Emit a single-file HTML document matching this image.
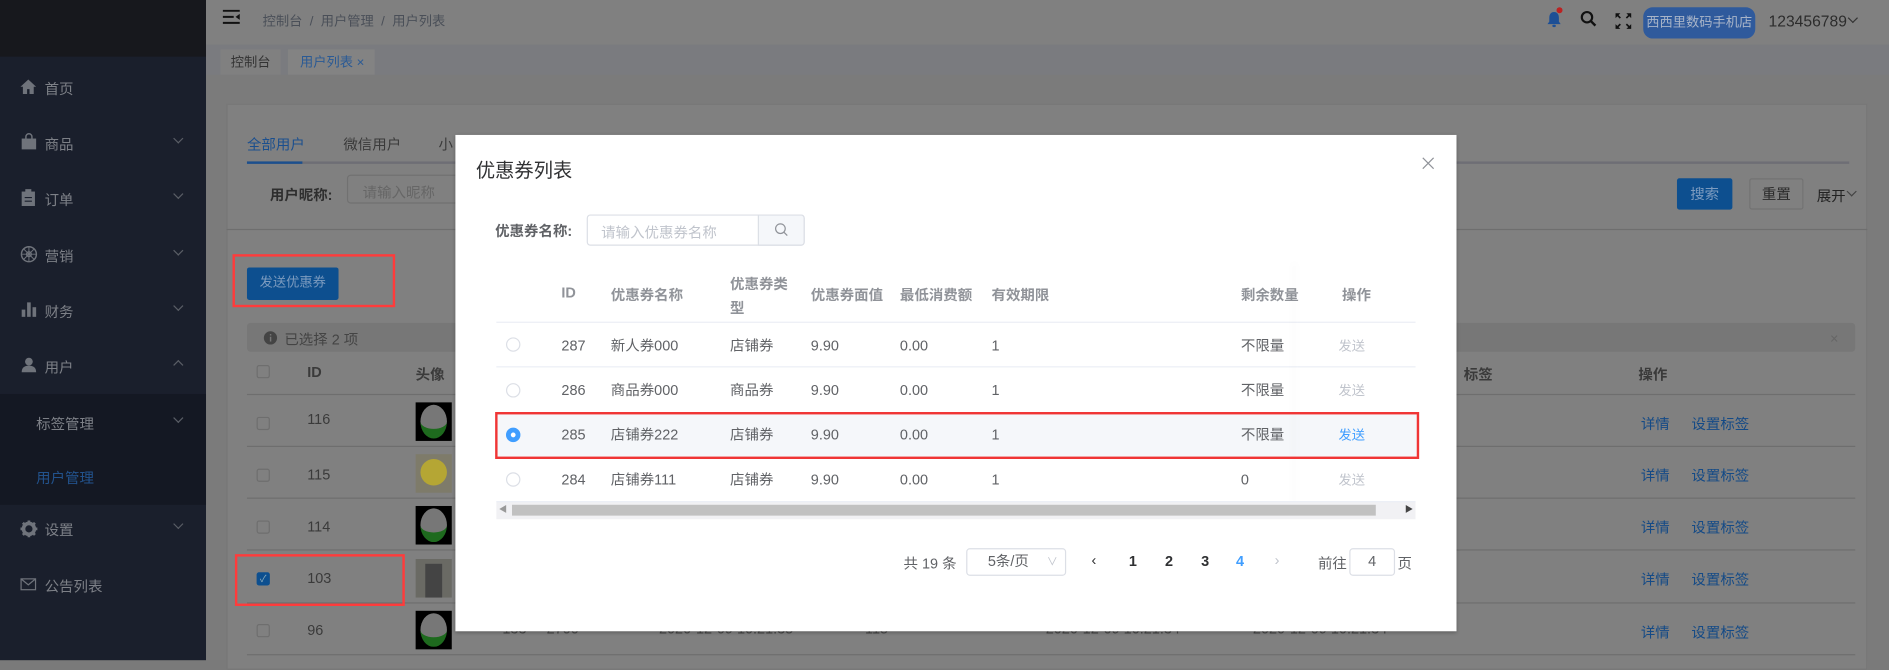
<!DOCTYPE html>
<html><head><meta charset="utf-8"><style>
*{margin:0;padding:0;box-sizing:border-box}
body{width:1889px;height:660px;overflow:hidden;background:#7a7a7a;font-family:"Liberation Sans","Noto Sans CJK SC",sans-serif;font-size:12px;color:#333}
#w{position:absolute;left:0;top:0;width:1568px;height:548px;transform:scale(1.20472);transform-origin:0 0;background:#7b7b7b}
.a{position:absolute;white-space:nowrap}
.side{left:0;top:0;width:171px;height:548px;background:#1a1f2c}
.mi{color:#7d8087;font-size:12px}
.chev{width:6px;height:6px;border-right:1px solid #5a5e66;border-bottom:1px solid #5a5e66;transform:rotate(45deg)}
.chevu{transform:rotate(-135deg)}
.g{color:#3a3a3a}
.line{height:1px;background:#6e6e6e}
.lk{color:#144a86}
.m{color:#606266}
.hl{height:1px;background:#ebeef5}
.radio{width:12px;height:12px;border:1px solid #dcdfe6;border-radius:50%;background:#fff}
svg.a{overflow:visible}
</style></head><body><div id="w">
<!-- sidebar -->
<div class="a side"></div>
<div class="a" style="left:0;top:0;width:171px;height:47px;background:#17181d"></div>
<div class="a" style="left:0;top:327px;width:171px;height:92px;background:#141823"></div>
<svg class="a" style="left:17px;top:66px" width="13" height="12" viewBox="0 0 13 12"><path d="M6.5 0L0 6h2v6h3.5V8h2v4H11V6h2z" fill="#6f737b"/></svg>
<div class="a mi" style="left:37px;top:65px">首页</div>
<svg class="a" style="left:18px;top:111px" width="12" height="13" viewBox="0 0 12 13"><path d="M0 4h12v9H0z" fill="#6f737b"/><path d="M3.5 5V2.5a2.5 2.5 0 0 1 5 0V5" stroke="#6f737b" fill="none" stroke-width="1.2"/></svg>
<div class="a mi" style="left:37px;top:111px">商品</div><div class="a chev" style="left:145px;top:112px"></div>
<svg class="a" style="left:18px;top:157px" width="11" height="14" viewBox="0 0 11 14"><path d="M0 2h11v12H0z" fill="#6f737b"/><rect x="3" y="0" width="5" height="3" fill="#6f737b"/><path d="M2.5 7h6M2.5 10h6" stroke="#1a1f2c"/></svg>
<div class="a mi" style="left:37px;top:157px">订单</div><div class="a chev" style="left:145px;top:158px"></div>
<svg class="a" style="left:17px;top:204px" width="14" height="14" viewBox="0 0 14 14"><circle cx="7" cy="7" r="6.2" stroke="#6f737b" fill="none" stroke-width="1.2"/><circle cx="7" cy="7" r="2" stroke="#6f737b" fill="none"/><path d="M7 1v12M1 7h12M2.8 2.8l8.4 8.4M11.2 2.8l-8.4 8.4" stroke="#6f737b" stroke-width=".8"/></svg>
<div class="a mi" style="left:37px;top:204px">营销</div><div class="a chev" style="left:145px;top:205px"></div>
<svg class="a" style="left:18px;top:251px" width="12" height="12" viewBox="0 0 12 12"><rect x="0" y="6" width="3" height="6" fill="#6f737b"/><rect x="4.5" y="0" width="3" height="12" fill="#6f737b"/><rect x="9" y="4" width="3" height="8" fill="#6f737b"/></svg>
<div class="a mi" style="left:37px;top:250px">财务</div><div class="a chev" style="left:145px;top:251px"></div>
<svg class="a" style="left:18px;top:297px" width="12" height="12" viewBox="0 0 12 12"><circle cx="6" cy="3.2" r="3.2" fill="#6f737b"/><path d="M0 12c0-4 2.5-5.5 6-5.5s6 1.5 6 5.5z" fill="#6f737b"/></svg>
<div class="a mi" style="left:37px;top:296px">用户</div><div class="a chev chevu" style="left:145px;top:300px"></div>
<div class="a mi" style="left:30px;top:343px">标签管理</div><div class="a chev" style="left:145px;top:344px"></div>
<div class="a" style="left:30px;top:388px;color:#22528c">用户管理</div>
<svg class="a" style="left:17px;top:432px" width="14" height="14" viewBox="0 0 14 14"><circle cx="7" cy="7" r="4.5" fill="none" stroke="#6f737b" stroke-width="3"/><path d="M7 0v3M7 11v3M0 7h3M11 7h3M2 2l2 2M10 10l2 2M12 2l-2 2M4 10l-2 2" stroke="#6f737b" stroke-width="2.2"/></svg>
<div class="a mi" style="left:37px;top:431px">设置</div><div class="a chev" style="left:145px;top:432px"></div>
<svg class="a" style="left:17px;top:480px" width="13" height="10" viewBox="0 0 13 10"><rect x=".5" y=".5" width="12" height="9" fill="none" stroke="#6f737b"/><path d="M.5.5l6 5 6-5" fill="none" stroke="#6f737b"/></svg>
<div class="a mi" style="left:37px;top:478px">公告列表</div>
<!-- header -->
<div class="a" style="left:171px;top:0;width:1397px;height:37px;background:#808080"></div>
<svg class="a" style="left:185px;top:8px" width="14" height="12" viewBox="0 0 14 12"><path d="M0 1h14M0 6h9M0 11h14" stroke="#111" stroke-width="1.6"/><path d="M14 3.5L10.5 6 14 8.5z" fill="#111"/></svg>
<div class="a" style="left:218px;top:9px;color:#4a4f58;font-size:11px">控制台 &nbsp;/ &nbsp;用户管理 &nbsp;/ &nbsp;用户列表</div>
<svg class="a" style="left:1284px;top:9px" width="12" height="14" viewBox="0 0 12 14"><path d="M6 1C3 1 2 3.5 2 6v3L0.5 11h11L10 9V6C10 3.5 9 1 6 1z" fill="#1d4f95"/><rect x="4.5" y="11.5" width="3" height="2" rx="1" fill="#1d4f95"/></svg>
<div class="a" style="left:1292px;top:6px;width:5px;height:5px;border-radius:50%;background:#b22"></div>
<svg class="a" style="left:1312px;top:9px" width="13" height="13" viewBox="0 0 13 13"><circle cx="5.3" cy="5.3" r="4.3" fill="none" stroke="#111" stroke-width="1.8"/><path d="M8.5 8.5L12.3 12.3" stroke="#111" stroke-width="2"/></svg>
<svg class="a" style="left:1341px;top:11px" width="13" height="13" viewBox="0 0 13 13" fill="#111"><path d="M0 0h4L0 4zM13 0v4L9 0zM0 13V9l4 4zM13 13H9l4-4z"/><path d="M1 1l3 3M12 1L9 4M1 12l3-3M12 12L9 9" stroke="#111" stroke-width="1.4"/></svg>
<div class="a" style="left:1364px;top:6px;width:93px;height:26px;border-radius:8px;background:#2f5a9c;color:#a8b4c8;font-size:11px;line-height:26px;text-align:center">西西里数码手机店</div>
<div class="a" style="left:1468px;top:10px;color:#2c2c2c;font-size:13px">123456789</div>
<div class="a chev" style="left:1535px;top:12px;border-color:#333"></div>
<div class="a" style="left:171px;top:37px;width:1397px;height:25px;background:#7a7b7f"></div>
<div class="a" style="left:183px;top:41px;width:50px;height:21px;background:#808080;color:#333;font-size:11px;text-align:center;line-height:22px">控制台</div>
<div class="a" style="left:239px;top:41px;width:72px;height:21px;background:#838383;color:#2a5a95;font-size:11px;line-height:22px;padding-left:10px">用户列表 ×</div>
<!-- card -->
<div class="a" style="left:188px;top:86px;width:1362px;height:470px;background:#808080;border:1px solid #777"></div>
<div class="a" style="left:205px;top:111px;color:#1b4f8e">全部用户</div>
<div class="a g" style="left:285px;top:111px">微信用户</div>
<div class="a g" style="left:364px;top:111px">小</div>
<div class="a" style="left:205px;top:134px;width:1330px;height:2px;background:#6e6e75"></div>
<div class="a" style="left:205px;top:134px;width:46px;height:2px;background:#1b4f8e"></div>
<div class="a" style="left:224px;top:153px;color:#2e2e2e;font-weight:bold">用户昵称:</div>
<div class="a" style="left:288px;top:145px;width:100px;height:24px;border:1px solid #717171;border-radius:3px;color:#666;padding:5px 12px">请输入昵称</div>
<div class="a" style="left:1392px;top:148px;width:46px;height:26px;background:#0d4f8f;border-radius:2px;color:#7c9bbf;text-align:center;line-height:26px">搜索</div>
<div class="a" style="left:1452px;top:148px;width:45px;height:26px;border:1px solid #727272;border-radius:2px;color:#2a2a2a;text-align:center;line-height:24px">重置</div>
<div class="a" style="left:1508px;top:154px;color:#222">展开</div><div class="a chev" style="left:1534px;top:156px;border-color:#444"></div>
<div class="a line" style="left:188px;top:190px;width:1362px"></div>
<div class="a" style="left:205px;top:222px;width:76px;height:27px;background:#0d4f8f;border-radius:2px;color:#7c9bbf;text-align:center;line-height:27px;font-size:11px">发送优惠券</div>
<div class="a" style="left:193px;top:211px;width:135px;height:44px;border:2px solid #ff3b3b"></div>
<div class="a" style="left:205px;top:268px;width:1335px;height:24px;background:#777;border-radius:3px"></div>
<svg class="a" style="left:219px;top:275px" width="11" height="11" viewBox="0 0 11 11"><circle cx="5.5" cy="5.5" r="5.5" fill="#444"/><rect x="5" y="4.5" width="1.2" height="4" fill="#777"/><rect x="5" y="2.3" width="1.2" height="1.2" fill="#777"/></svg>
<div class="a" style="left:236px;top:273px;color:#444;font-size:12px">已选择 2 项</div>
<div class="a" style="left:1519px;top:274px;color:#666">×</div>
<div class="a" style="left:213px;top:303px;width:11px;height:11px;border:1px solid #6e6e6e;border-radius:2px"></div>
<div class="a" style="left:255px;top:302px;color:#3a3a3a;font-weight:bold">ID</div>
<div class="a" style="left:345px;top:302px;color:#3a3a3a;font-weight:bold">头像</div>
<div class="a" style="left:1215px;top:302px;color:#3a3a3a;font-weight:bold">标签</div>
<div class="a" style="left:1360px;top:302px;color:#3a3a3a;font-weight:bold">操作</div>
<div class="a line" style="left:205px;top:327px;width:1335px"></div>
<div class="a line" style="left:205px;top:370px;width:1335px"></div>
<div class="a line" style="left:205px;top:413px;width:1335px"></div>
<div class="a line" style="left:205px;top:456px;width:1335px"></div>
<div class="a line" style="left:205px;top:500px;width:1335px"></div>
<div class="a line" style="left:205px;top:543px;width:1335px"></div>
<div class="a" style="left:213px;top:346px;width:11px;height:11px;border:1px solid #6e6e6e;border-radius:2px"></div>
<div class="a" style="left:213px;top:389px;width:11px;height:11px;border:1px solid #6e6e6e;border-radius:2px"></div>
<div class="a" style="left:213px;top:432px;width:11px;height:11px;border:1px solid #6e6e6e;border-radius:2px"></div>
<div class="a" style="left:213px;top:475px;width:11px;height:11px;background:#0d4f8f;border-radius:2px;color:#8ab;font-size:8px;line-height:11px;text-align:center">✓</div>
<div class="a" style="left:213px;top:518px;width:11px;height:11px;border:1px solid #6e6e6e;border-radius:2px"></div>
<div class="a g" style="left:255px;top:341px">116</div>
<div class="a g" style="left:255px;top:387px">115</div>
<div class="a g" style="left:255px;top:430px">114</div>
<div class="a g" style="left:255px;top:473px">103</div>
<div class="a g" style="left:255px;top:516px">96</div>
<div class="a" style="left:345px;top:334px;width:30px;height:32px;background:#000"><div style="margin:2px 4px;width:22px;height:28px;border-radius:50%;background:#777;border-bottom:8px solid #1e6a1e"></div></div>
<div class="a" style="left:345px;top:377px;width:30px;height:32px;background:#7e7b6a"><div style="margin:4px 4px;width:22px;height:22px;border-radius:50%;background:#b5a634"></div></div>
<div class="a" style="left:345px;top:420px;width:30px;height:32px;background:#000"><div style="margin:2px 4px;width:22px;height:28px;border-radius:50%;background:#777;border-bottom:8px solid #1e6a1e"></div></div>
<div class="a" style="left:345px;top:464px;width:30px;height:32px;background:#6a6a64"><div style="margin:4px 8px;width:14px;height:28px;background:#444"></div></div>
<div class="a" style="left:345px;top:507px;width:30px;height:32px;background:#000"><div style="margin:2px 4px;width:22px;height:28px;border-radius:50%;background:#777;border-bottom:8px solid #1e6a1e"></div></div>
<div class="a" style="left:195px;top:460px;width:141px;height:43px;border:2px solid #ff3b3b"></div>
<div class="a lk" style="left:1362px;top:343px">详情</div><div class="a lk" style="left:1404px;top:343px">设置标签</div>
<div class="a lk" style="left:1362px;top:386px">详情</div><div class="a lk" style="left:1404px;top:386px">设置标签</div>
<div class="a lk" style="left:1362px;top:429px">详情</div><div class="a lk" style="left:1404px;top:429px">设置标签</div>
<div class="a lk" style="left:1362px;top:472px">详情</div><div class="a lk" style="left:1404px;top:472px">设置标签</div>
<div class="a lk" style="left:1362px;top:516px">详情</div><div class="a lk" style="left:1404px;top:516px">设置标签</div>
<div class="a" style="left:417px;top:515px;color:#444">133 &nbsp; &nbsp; 2700</div>
<div class="a" style="left:547px;top:515px;color:#444">2020-12-09 10:21:35</div>
<div class="a" style="left:718px;top:515px;color:#444">115</div>
<div class="a" style="left:868px;top:515px;color:#444">2020-12-09 10:21:34</div>
<div class="a" style="left:1040px;top:515px;color:#444">2020-12-09 10:21:34</div>
<!-- modal -->
<div class="a" style="left:378px;top:112px;width:831px;height:412px;background:#fff;box-shadow:0 1px 3px rgba(0,0,0,.3)"></div>
<div class="a" style="left:395px;top:128px;font-size:16px;color:#303133">优惠券列表</div>
<svg class="a" style="left:1181px;top:131px" width="9" height="9" viewBox="0 0 9 9"><path d="M0 0L9 9M9 0L0 9" stroke="#909399" stroke-width="1"/></svg>
<div class="a" style="left:411px;top:183px;color:#606266;font-weight:bold">优惠券名称:</div>
<div class="a" style="left:487px;top:178px;width:181px;height:26px;border:1px solid #dcdfe6;border-radius:3px"></div>
<div class="a" style="left:629px;top:178px;width:39px;height:26px;border:1px solid #dcdfe6;border-radius:0 3px 3px 0;background:#f5f7fa"></div>
<svg class="a" style="left:643px;top:185px" width="11" height="11" viewBox="0 0 11 11"><circle cx="4.8" cy="4.8" r="4" fill="none" stroke="#909399"/><path d="M7.8 7.8L10.5 10.5" stroke="#909399"/></svg>
<div class="a" style="left:499px;top:184px;color:#c0c4cc">请输入优惠券名称</div>
<div class="a m" style="left:466px;top:236px;font-weight:bold;color:#909399">ID</div>
<div class="a" style="left:507px;top:236px;font-weight:bold;color:#909399">优惠券名称</div>
<div class="a" style="left:606px;top:226px;font-weight:bold;color:#909399;line-height:20px">优惠券类<br>型</div>
<div class="a" style="left:673px;top:236px;font-weight:bold;color:#909399">优惠券面值</div>
<div class="a" style="left:747px;top:236px;font-weight:bold;color:#909399">最低消费额</div>
<div class="a" style="left:823px;top:236px;font-weight:bold;color:#909399">有效期限</div>
<div class="a" style="left:1030px;top:236px;font-weight:bold;color:#909399">剩余数量</div>
<div class="a" style="left:1114px;top:236px;font-weight:bold;color:#909399">操作</div>
<div class="a" style="left:411px;top:342px;width:767px;height:39px;background:#f5f7fa"></div>
<div class="a hl" style="left:412px;top:267px;width:763px"></div>
<div class="a hl" style="left:412px;top:304px;width:763px"></div>
<div class="a hl" style="left:412px;top:342px;width:763px"></div>
<div class="a hl" style="left:412px;top:379px;width:763px"></div>
<div class="a" style="left:1076px;top:218px;width:1px;height:200px;box-shadow:-2px 0 6px rgba(0,0,0,.08)"></div>
<div class="a radio" style="left:420px;top:280px"></div>
<div class="a radio" style="left:420px;top:318px"></div>
<div class="a radio" style="left:420px;top:355px;border:4px solid #409eff;background:#fff"></div>
<div class="a radio" style="left:420px;top:392px"></div>
<div class="a m" style="left:466px;top:280px">287</div><div class="a m" style="left:507px;top:278px">新人券000</div><div class="a m" style="left:606px;top:278px">店铺券</div><div class="a m" style="left:673px;top:280px">9.90</div><div class="a m" style="left:747px;top:280px">0.00</div><div class="a m" style="left:823px;top:280px">1</div><div class="a m" style="left:1030px;top:278px">不限量</div><div class="a" style="left:1111px;top:279px;color:#c0c4cc;font-size:11px">发送</div>
<div class="a m" style="left:466px;top:317px">286</div><div class="a m" style="left:507px;top:315px">商品券000</div><div class="a m" style="left:606px;top:315px">商品券</div><div class="a m" style="left:673px;top:317px">9.90</div><div class="a m" style="left:747px;top:317px">0.00</div><div class="a m" style="left:823px;top:317px">1</div><div class="a m" style="left:1030px;top:315px">不限量</div><div class="a" style="left:1111px;top:316px;color:#c0c4cc;font-size:11px">发送</div>
<div class="a m" style="left:466px;top:354px">285</div><div class="a m" style="left:507px;top:352px">店铺券222</div><div class="a m" style="left:606px;top:352px">店铺券</div><div class="a m" style="left:673px;top:354px">9.90</div><div class="a m" style="left:747px;top:354px">0.00</div><div class="a m" style="left:823px;top:354px">1</div><div class="a m" style="left:1030px;top:352px">不限量</div><div class="a" style="left:1111px;top:353px;color:#409eff;font-size:11px">发送</div>
<div class="a m" style="left:466px;top:391px">284</div><div class="a m" style="left:507px;top:389px">店铺券111</div><div class="a m" style="left:606px;top:389px">店铺券</div><div class="a m" style="left:673px;top:391px">9.90</div><div class="a m" style="left:747px;top:391px">0.00</div><div class="a m" style="left:823px;top:391px">1</div><div class="a m" style="left:1030px;top:391px">0</div><div class="a" style="left:1111px;top:390px;color:#c0c4cc;font-size:11px">发送</div>
<div class="a" style="left:411px;top:342px;width:767px;height:39px;border:2px solid #f03535"></div>
<div class="a" style="left:412px;top:416px;width:763px;height:15px;background:#f1f1f4;border-top:1px solid #ebeef5"></div>
<div class="a" style="left:425px;top:419px;width:717px;height:9px;background:#c1c1c1"></div>
<div class="a" style="left:414px;top:418px;font-size:7px;color:#999">◀</div>
<div class="a" style="left:1166px;top:418px;font-size:7px;color:#444">▶</div>
<div class="a m" style="left:750px;top:459px">共 19 条</div>
<div class="a" style="left:802px;top:455px;width:83px;height:23px;border:1px solid #dcdfe6;border-radius:3px;color:#606266;line-height:21px;padding-left:17px">5条/页<span style="position:absolute;right:6px;color:#c0c4cc;font-size:9px">∨</span></div>
<div class="a" style="left:906px;top:458px;color:#303133">‹</div>
<div class="a" style="left:937px;top:459px;color:#303133;font-weight:bold">1</div>
<div class="a" style="left:967px;top:459px;color:#303133;font-weight:bold">2</div>
<div class="a" style="left:997px;top:459px;color:#303133;font-weight:bold">3</div>
<div class="a" style="left:1026px;top:459px;color:#409eff;font-weight:bold">4</div>
<div class="a" style="left:1058px;top:458px;color:#c0c4cc">›</div>
<div class="a m" style="left:1094px;top:459px">前往</div>
<div class="a" style="left:1120px;top:455px;width:38px;height:23px;border:1px solid #dcdfe6;border-radius:3px;color:#606266;text-align:center;line-height:21px">4</div>
<div class="a m" style="left:1160px;top:459px">页</div>
</div></body></html>
